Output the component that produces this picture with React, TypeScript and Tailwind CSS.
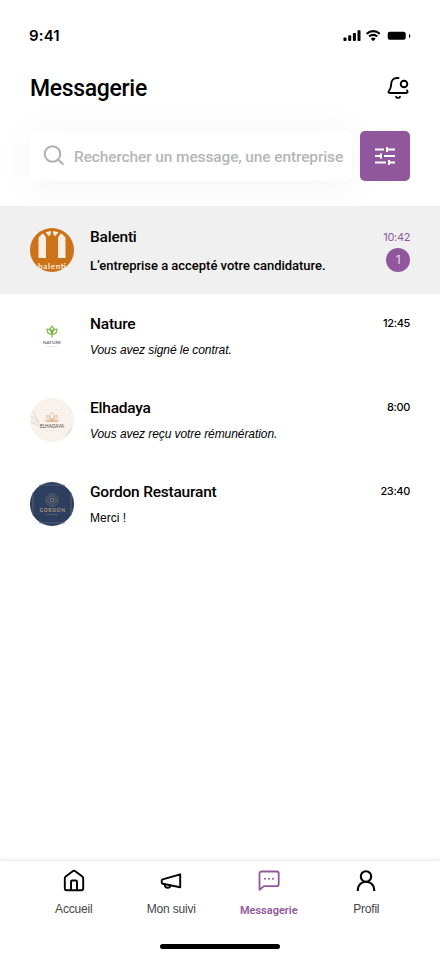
import React, { useState } from 'react';

// --- STATUS BAR ICONS ---
const StatusIcons = () => (
  <svg width="68" height="14" viewBox="0 0 68 14" fill="#000">
    <rect x="0.5" y="8.5" width="3" height="3.5" rx="0.8" />
    <rect x="5.2" y="6.3" width="3" height="5.7" rx="0.8" />
    <rect x="9.9" y="4" width="3" height="8" rx="0.8" />
    <rect x="14.5" y="1.3" width="3" height="10.7" rx="0.8" />
    <path d="M30.2 3.2c2.1 0 4.1.8 5.6 2.2.1.1.3.1.4 0l1.1-1.1c.1-.1.1-.3 0-.4a10.2 10.2 0 0 0-14.2 0c-.1.1-.1.3 0 .4l1.1 1.1c.1.1.3.1.4 0a8.1 8.1 0 0 1 5.6-2.2zm0 3.7c1.2 0 2.3.4 3.1 1.2.1.1.3.1.4 0l1.1-1.2c.1-.1.1-.3 0-.4a6.7 6.7 0 0 0-9.2 0c-.1.1-.1.3 0 .4l1.1 1.2c.1.1.3.1.4 0 .9-.8 2-1.2 3.1-1.2zm2.2 2.6c.1.1.1.3 0 .4l-2 2c-.1.1-.3.1-.4 0l-2-2c-.1-.1-.1-.3 0-.4a3.4 3.4 0 0 1 4.4 0z" />
    <rect x="44.7" y="2.8" width="18" height="8" rx="2" />
    <path d="M66 5v4c.8-.3 1.3-1.1 1.3-2S66.8 5.3 66 5z" />
  </svg>
);

const BellIcon = () => (
  <svg width="24" height="24" viewBox="0 0 24 24" fill="none" stroke="#000" strokeWidth="1.9" strokeLinecap="round" strokeLinejoin="round">
    <path d="M12.5 2H11C7.6 2 5.4 4.5 5.2 7.7 5 11 5.1 12.2 3.2 14.5 2 16 2.3 17 4 17h16c1.6 0 2-1.1 1.1-2.6" />
    <circle cx="18" cy="8" r="3.3" />
    <path d="M10 20.8c.6 1.4 3.4 1.4 4 0" />
  </svg>
);

const SearchIcon = () => (
  <svg width="22" height="22" viewBox="0 0 22 22" fill="none" stroke="#b0b0b0" strokeWidth="2" strokeLinecap="round">
    <circle cx="9.5" cy="9" r="7.8" />
    <path d="M15.2 14.7l4.6 4.3" />
  </svg>
);

const FilterIcon = () => (
  <svg width="22" height="20" viewBox="0 0 22 20" fill="none" stroke="#fff" strokeWidth="2">
    <path d="M1 3.5h9M13 3.5h8M13 1v5M1 10h6M7 7.5v5M10 10h11M1 16.5h11M15 14v5M15 16.5h6" />
  </svg>
);

// --- COMPANY LOGOS ---
const BalentiLogo = () => (
  <svg width="44" height="44" viewBox="0 0 44 44">
    <circle cx="22" cy="22" r="22" fill="#cc7218" />
    <g fill="#fbeee0">
      <path d="M8.5 9.5L12.5 5.5Q16 7.5 16 11V30H8.5zM28 30V11Q28 7.5 31.5 5.5L35.5 9.5V30z" />
      <path d="M15.5 4.2L20.8 3V6L18.8 8.3zM23.2 3L28.5 4.2L25.2 8.3L23.2 6z" />
    </g>
    <text x="22" y="41" textAnchor="middle" fill="#fbeee0" fontSize="8" fontWeight="700" textLength="28" fontFamily="Lato, sans-serif">balenti</text>
  </svg>
);

const NatureLogo = () => (
  <svg width="44" height="44" viewBox="0 0 44 44">
    <g fill="none" stroke="#7cba4c" strokeWidth="1.2" strokeLinejoin="round">
      <path d="M22 12l2 2.7-2 2.7-2-2.7zM22 23.5V17.5M21.5 20.3C18.5 20.3 17 18 17 15c3 0 4.5 1.8 4.5 5.3zM22.5 20.3C25.5 20.3 27 18 27 15c-3 0-4.5 1.8-4.5 5.3z" />
    </g>
    <text x="22" y="29.5" textAnchor="middle" fill="#444" fontSize="4.6" textLength="18" fontFamily="Lato, sans-serif">NATURE</text>
    <text x="22" y="33" textAnchor="middle" fill="#b5dc99" fontSize="2.5" textLength="11" fontFamily="Lato, sans-serif">SERVICES</text>
  </svg>
);

const ElhadayaLogo = () => (
  <svg width="44" height="44" viewBox="0 0 44 44">
    <circle cx="22" cy="22" r="22" fill="#f8f1ec" />
    <g fill="none" stroke="#e4dfda" strokeWidth="1.4">
      <path d="M1 18l8 7M3 13l6 12M1 24l9 4M42 30l-5 6M40 33l-5 6" />
    </g>
    <g fill="none" stroke="#e2b68e" strokeWidth="0.9">
      <path d="M22 14.500c-3 3-3 6 0 8 3-2 3-5 0-8zM22 22.500c-3 0-5-2-5-5 2 0 4 2 5 5zM22 22.500c3 0 5-2 5-5-2 0-4 2-5 5zM15 20.500c1 2 3 3 7 2 4 1 6 0 7-2M15.500 23.500h13" />
    </g>
    <text x="22" y="29.7" textAnchor="middle" fill="#4c4642" fontSize="5" textLength="24" lengthAdjust="spacingAndGlyphs" fontFamily="Lato, sans-serif">ELHADAYA</text>
    <path d="M14 32.5h16" stroke="#e8dfd8" strokeWidth="0.6" />
  </svg>
);

const GordonLogo = () => (
  <svg width="44" height="44" viewBox="0 0 44 44">
    <circle cx="22" cy="22" r="22" fill="#2d3e5f" />
    <path d="M9 3h26M3 10v24M41 10v24M9 41h26" stroke="#697080" strokeWidth="0.7" />
    <g fill="none" stroke="#978f80" strokeWidth="0.9">
      <circle cx="22" cy="18" r="2" />
      <circle cx="22" cy="18" r="4.2" strokeDasharray="1.3 0.7" />
      <circle cx="22" cy="18" r="6.2" strokeDasharray="1 1" />
    </g>
    <text x="22.2" y="30" textAnchor="middle" fill="#b69c7c" fontSize="4.8" fontWeight="700" textLength="25.5" fontFamily="Lato, sans-serif">GORDON</text>
    <path d="M16 32.5h12" stroke="#777268" strokeWidth="0.8" strokeDasharray="1.5 0.5" />
  </svg>
);

// --- TAB BAR ICONS ---
const HomeIcon = () => (
  <svg width="24" height="24" viewBox="0 0 24 24" fill="none" stroke="currentColor" strokeWidth="1.9" strokeLinecap="round" strokeLinejoin="round">
    <path d="M2.8 9.3c0-.8.3-1.3.9-1.8l7-5.3c.8-.6 1.8-.6 2.6 0l7 5.3c.6.5.9 1 .9 1.8v10c0 1.2-.7 1.9-1.9 1.9H4.7c-1.2 0-1.9-.7-1.9-1.9z" />
    <path d="M9 21v-8.3c0-.7.4-1.2 1.2-1.2h3.6c.8 0 1.2.5 1.2 1.2V21" />
  </svg>
);

const MegaphoneIcon = () => (
  <svg width="24" height="24" viewBox="0 0 24 24" fill="none" stroke="currentColor" strokeWidth="1.9" strokeLinecap="round" strokeLinejoin="round">
    <path d="M21.2 5.3v13L3.7 14.8c-.7-.2-1-.5-1-1.1v-2.2c0-.6.3-.9 1-1.1z" />
    <path d="M5.8 15.5c-.2 2 1 3.3 2.9 3.3 1.5 0 2.6-.9 2.9-2.3" />
  </svg>
);

const ChatIcon = () => (
  <svg width="24" height="24" viewBox="0 0 24 24" fill="none" stroke="currentColor" strokeWidth="1.8" strokeLinejoin="round">
    <path d="M2.5 20.8V4.4c0-1.1.8-1.9 1.9-1.9h15.4c1.1 0 1.9.8 1.9 1.9v10.8c0 1.1-.8 1.9-1.9 1.9H7z" />
    <g fill="currentColor" stroke="none">
      <circle cx="8" cy="9.8" r="1" />
      <circle cx="12" cy="9.8" r="1" />
      <circle cx="16" cy="9.8" r="1" />
    </g>
  </svg>
);

const ProfileIcon = () => (
  <svg width="24" height="24" viewBox="0 0 24 24" fill="none" stroke="currentColor" strokeWidth="2.1">
    <circle cx="12" cy="7.5" r="5.2" />
    <path d="M3.8 22v-1.3c0-4.5 3.5-8 8.2-8s8.2 3.5 8.2 8V22" />
  </svg>
);

// --- MOCK DATA ---
const conversations = [
  { id: 1, name: 'Balenti', message: 'L’entreprise a accepté votre candidature.', time: '10:42', unread: 1, logo: BalentiLogo, messageStyle: "font-['Roboto',sans-serif] font-medium text-[13px] tracking-[-0.02px]" },
  { id: 2, name: 'Nature', message: 'Vous avez signé le contrat.', time: '12:45', unread: 0, logo: NatureLogo, messageStyle: 'italic text-xs tracking-[-0.07px]' },
  { id: 3, name: 'Elhadaya', message: 'Vous avez reçu votre rémunération.', time: '8:00', unread: 0, logo: ElhadayaLogo, messageStyle: 'italic text-xs tracking-[-0.07px]' },
  { id: 4, name: 'Gordon Restaurant', message: 'Merci !', time: '23:40', unread: 0, logo: GordonLogo, messageStyle: 'text-xs' },
];

const tabs = [
  { id: 'home', label: 'Accueil', icon: HomeIcon },
  { id: 'tracking', label: 'Mon suivi', icon: MegaphoneIcon },
  { id: 'messages', label: 'Messagerie', icon: ChatIcon },
  { id: 'profile', label: 'Profil', icon: ProfileIcon },
];

export default function App() {
  const [activeTab, setActiveTab] = useState('messages');
  const [searchQuery, setSearchQuery] = useState('');

  return (
    <div className="flex h-[956px] w-[440px] flex-col overflow-hidden bg-white font-['Liberation_Sans',sans-serif] text-black">

      {/* --- STATUS BAR --- */}
      <div className="flex h-[58px] items-start justify-between px-[29px] pt-[26px]">
        <span className="font-['Inter',sans-serif] text-[15px] font-semibold leading-5 tracking-[0.15px]">9:41</span>
        <div className="pt-[3px]"><StatusIcons /></div>
      </div>

      {/* --- HEADER --- */}
      <header className="flex h-[60px] items-center justify-between px-[30px]">
        <h1 className="pt-[3px] font-['Roboto',sans-serif] text-[23px] font-medium tracking-[-0.33px]">Messagerie</h1>
        <button className="pb-px"><BellIcon /></button>
      </header>

      {/* --- SEARCH --- */}
      <div className="flex h-[88px] gap-2 px-[30px] pt-[13px]">
        <div className="flex h-[50px] w-[322px] items-center rounded-lg bg-white pl-[13px] shadow-[0_4px_40px_rgba(0,0,0,0.05)]">
          <SearchIcon />
          <input
            type="text"
            placeholder="Rechercher un message, une entreprise"
            value={searchQuery}
            onChange={(e) => setSearchQuery(e.target.value)}
            className="ml-[9px] w-[276px] bg-transparent pt-[3px] font-['Roboto',sans-serif] text-[15.5px] font-medium tracking-[-0.13px] outline-none placeholder:text-[#b6b6b6]"
          />
        </div>
        <button className="flex size-[50px] items-center justify-center rounded-[5px] bg-[#91579d]">
          <FilterIcon />
        </button>
      </div>

      {/* --- CONVERSATIONS --- */}
      <main className="flex-1">
        {conversations.map((item) => (
          <div key={item.id} className={`flex px-[30px] ${item.unread ? 'h-[88px] bg-[#f0f0f0] pt-[22px]' : 'h-[84px] pt-5'}`}>
            <item.logo />
            <div className="ml-4 flex-1">
              <h2 className={`font-['Roboto',sans-serif] text-[15.5px] font-medium tracking-[-0.22px] ${item.unread ? 'leading-[18px]' : 'leading-5'}`}>{item.name}</h2>
              <p className={`whitespace-nowrap leading-4 ${item.unread ? 'mt-3' : 'mt-2'} ${item.messageStyle}`}>{item.message}</p>
            </div>
            <div className="flex flex-col items-end font-['Inter',sans-serif] tracking-[-0.35px]">
              <span className={`text-[11px] leading-[18px] ${item.unread ? 'text-[#91579d]' : 'font-medium'}`}>{item.time}</span>
              {item.unread > 0 && (
                <span className="mt-0.5 flex size-6 items-center justify-center rounded-full bg-[#91579d] text-xs text-[#eadcec]">{item.unread}</span>
              )}
            </div>
          </div>
        ))}
      </main>

      {/* --- TAB BAR --- */}
      <nav className="flex h-[95px] flex-col items-center shadow-[0_-1px_4px_rgba(0,0,0,0.12)]">
        <div className="flex h-[58px] w-[390px] pt-2">
          {tabs.map((tab) => (
            <button
              key={tab.id}
              onClick={() => setActiveTab(tab.id)}
              className={`flex w-[97.5px] flex-col items-center justify-start ${activeTab === tab.id ? 'text-[#91579d]' : 'text-black'}`}
            >
              <tab.icon />
              <span className={`leading-4 ${activeTab === tab.id ? "mt-2.5 font-['Roboto',sans-serif] text-[11px] font-semibold" : 'mt-2 text-xs tracking-[-0.2px] text-[#444]'}`}>{tab.label}</span>
            </button>
          ))}
        </div>
        <div className="mt-[25px] h-[5px] w-[120px] shrink-0 rounded-full bg-black" />
      </nav>
    </div>
  );
}
